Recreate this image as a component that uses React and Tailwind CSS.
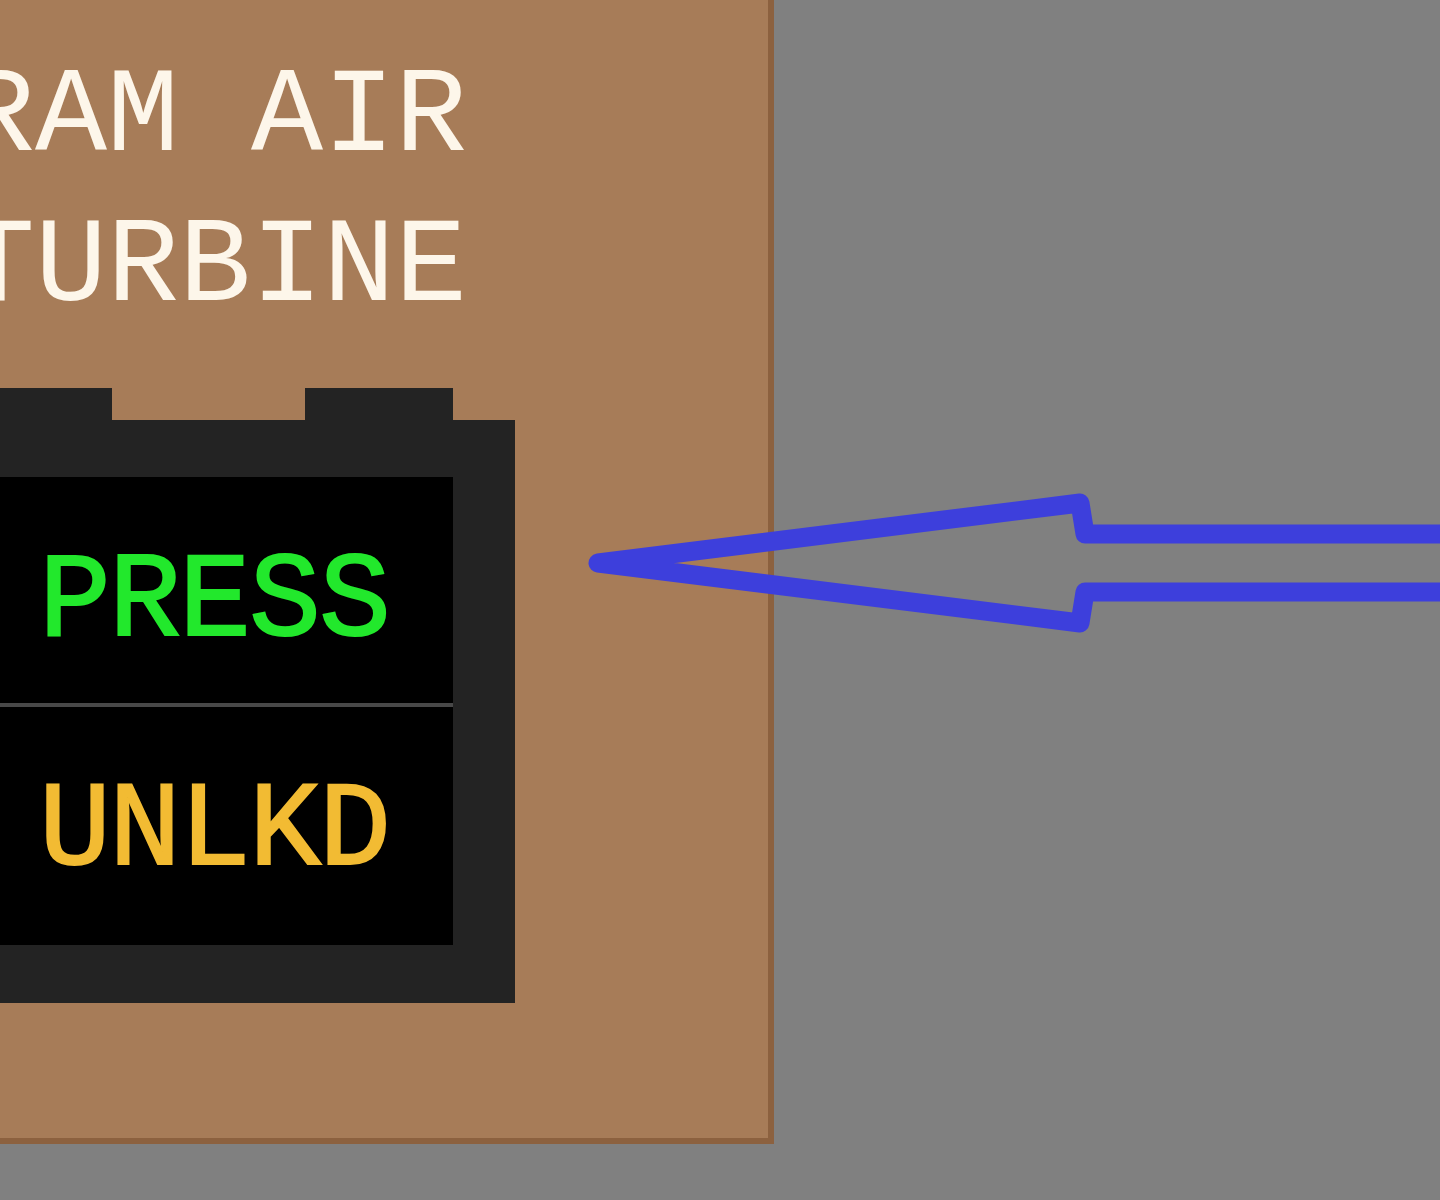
import React from 'react';

const mono = { fontFamily: '"Liberation Mono", "DejaVu Sans Mono", monospace' };

// Light capsule: black face split in two lines, dark housing around it
const Annunciator = () => (
  <div className="w-[515px]">
    {/* guard tabs on top of the housing */}
    <div className="flex h-[32px]">
      <div className="w-[112px] bg-[#232323]" />
      <div className="w-[193px]" />
      <div className="w-[148px] bg-[#232323]" />
    </div>
    <div className="flex h-[583px] bg-[#232323]">
      <div className="w-[453px] pt-[57px]">
        <div className="flex flex-col bg-black" style={mono}>
          <div className="h-[226px] pt-[66px] pl-[39px] text-[120px] leading-none tracking-[-2px] text-[#22e82c] [-webkit-text-stroke:2px_#22e82c]">
            PRESS
          </div>
          <div className="h-[4px] bg-[#484848]" />
          <div className="h-[238px] pt-[65px] pl-[39px] text-[120px] leading-none tracking-[-2px] text-[#f2bb33] [-webkit-text-stroke:2px_#f2bb33]">
            UNLKD
          </div>
        </div>
      </div>
    </div>
  </div>
);

const Arrow = () => (
  <svg
    className="pointer-events-none absolute left-0 top-0"
    width="1440"
    height="1200"
    viewBox="0 0 1440 1200"
  >
    <path
      d="M1440 534 L1085 534 L1080 503 L598 563 L1080 623 L1085 592 L1440 592"
      fill="none"
      stroke="#3d3fdc"
      strokeWidth="19"
      strokeLinejoin="round"
      strokeLinecap="round"
    />
  </svg>
);

export default function App() {
  return (
    <div className="relative h-[1200px] w-[1440px] overflow-hidden bg-[#808080]">
      <div className="h-[1144px] w-[774px] overflow-hidden border-b-[6px] border-r-[6px] border-[#8c613f] bg-[#a77c58]">
        <div className="-ml-[37px] pt-[43px]">
          <div className="text-[120px] leading-[150px] text-[#fdf6ea] whitespace-pre" style={mono}>
            <div>RAM AIR</div>
            <div>TURBINE</div>
          </div>
          <div className="mt-[45px] ml-[37px]">
            <Annunciator />
          </div>
        </div>
      </div>
      <Arrow />
    </div>
  );
}
